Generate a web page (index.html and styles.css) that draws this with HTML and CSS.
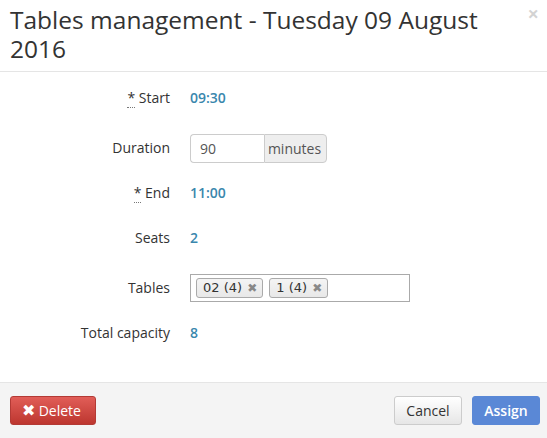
FILE: index.html
```html
<!DOCTYPE html>
<html>
<head>
<meta charset="utf-8">
<link rel="stylesheet" href="styles.css">
</head>
<body>
<div class="modal">
  <div class="modal-header">
    <h3 class="modal-title">Tables management - Tuesday 09 August 2016</h3>
    <span class="close">&times;</span>
  </div>
  <div class="modal-body">
    <div class="row">
      <div class="label"><abbr class="req">*</abbr> Start</div>
      <div class="value">09:30</div>
    </div>
    <div class="row row-input">
      <div class="label">Duration</div>
      <div class="input-group">
        <span class="input">90</span>
        <span class="addon">minutes</span>
      </div>
    </div>
    <div class="row">
      <div class="label"><abbr class="req">*</abbr> End</div>
      <div class="value">11:00</div>
    </div>
    <div class="row">
      <div class="label">Seats</div>
      <div class="value">2</div>
    </div>
    <div class="row row-input">
      <div class="label">Tables</div>
      <div class="select">
        <span class="tag">02 (4) <span class="tag-x">&#x2716;</span></span>
        <span class="tag">1 (4) <span class="tag-x">&#x2716;</span></span>
      </div>
    </div>
    <div class="row">
      <div class="label">Total capacity</div>
      <div class="value">8</div>
    </div>
  </div>
  <div class="modal-footer">
    <button class="btn btn-danger"><span class="x-icon">&#x2716;</span> Delete</button>
    <div class="spacer"></div>
    <button class="btn btn-default">Cancel</button>
    <button class="btn btn-primary">Assign</button>
  </div>
</div>
</body>
</html>
```

FILE: styles.css
```css
* { box-sizing: border-box; }
html, body { margin: 0; padding: 0; background: #fff; }
body {
  font-family: "Open Sans", "DejaVu Sans", sans-serif;
  font-size: 14px;
  color: #333;
  width: 547px;
  height: 438px;
  overflow: hidden;
}
.modal {
  display: flex;
  flex-direction: column;
  height: 438px;
}
.modal-header {
  position: relative;
  padding: 5px 40px 8px 10px;
  border-bottom: 1px solid #e5e5e5;
}
.modal-title {
  margin: 0;
  font-size: 24.5px;
  font-weight: 400;
  line-height: 29px;
  color: #333;
}
.close {
  position: absolute;
  right: 8px;
  top: 2px;
  font-size: 20px;
  font-weight: 700;
  color: #000;
  opacity: 0.17;
  line-height: 24px;
}
.modal-body {
  flex: 1;
  padding: 3.5px 0 0 0;
  display: flex;
  flex-direction: column;
}
.row {
  display: grid;
  grid-template-columns: 170px auto;
  column-gap: 20px;
  align-items: center;
  height: 45px;
  line-height: 20px;
}
.row-input { height: 50px; padding-top: 5px; }
.label { text-align: right; color: #333; }
.req {
  text-decoration: none;
  border-bottom: 1px dotted #777;
  cursor: help;
}
.value {
  color: #3a87ad;
  font-weight: 600;
}
.input-group {
  display: flex;
  width: 137px;
  height: 29px;
}
.input {
  width: 74px;
  border: 1px solid #ccc;
  border-right: none;
  border-radius: 4px 0 0 4px;
  padding: 4px 9px;
  line-height: 19px;
  color: #555;
}
.addon {
  flex: 1;
  border: 1px solid #ccc;
  border-radius: 0 4px 4px 0;
  background: #eee;
  padding: 4px 4px 4px 2px;
  line-height: 19px;
  color: #555;
  text-align: center;
}
.select {
  width: 220px;
  height: 28px;
  border: 1px solid #aaa;
  display: flex;
  align-items: center;
  gap: 6px;
  padding: 0 5px;
}
.tag {
  font-family: "DejaVu Sans", Verdana, sans-serif;
  font-size: 13px;
  color: #333;
  border: 1px solid #aaa;
  border-radius: 3px;
  background: linear-gradient(#f4f4f4, #e8e8e8);
  height: 20px;
  line-height: 18px;
  padding: 0 5px 0 6px;
}
.tag-x {
  color: #888;
  font-size: 12px;
  margin-left: 1px;
}
.modal-footer {
  height: 56px;
  border-top: 1px solid #e5e5e5;
  background: #f4f4f4;
  display: flex;
  align-items: center;
  padding: 0 7px 0 10px;
  gap: 10px;
}
.spacer { flex: 1; }
.btn {
  font-family: "Open Sans", sans-serif;
  font-size: 14px;
  height: 29px;
  padding: 0 12px;
  border-radius: 3px;
  line-height: 27px;
}
.btn-danger {
  width: 86px;
  color: #fff;
  border: 1px solid #b33a35;
  background: linear-gradient(#e15e58, #bd362f);
  padding: 0 6px 0 11px;
  text-align: left;
}
.x-icon { font-size: 16px; }
.btn-default {
  width: 68px;
  color: #333;
  border: 1px solid #ccc;
  background: linear-gradient(#fff, #e6e6e6);
  padding: 0;
}
.btn-primary {
  width: 68px;
  color: #fff;
  border: 1px solid #5a88d6;
  background: #5a88d6;
  padding: 0;
  font-weight: 600;
}
```
